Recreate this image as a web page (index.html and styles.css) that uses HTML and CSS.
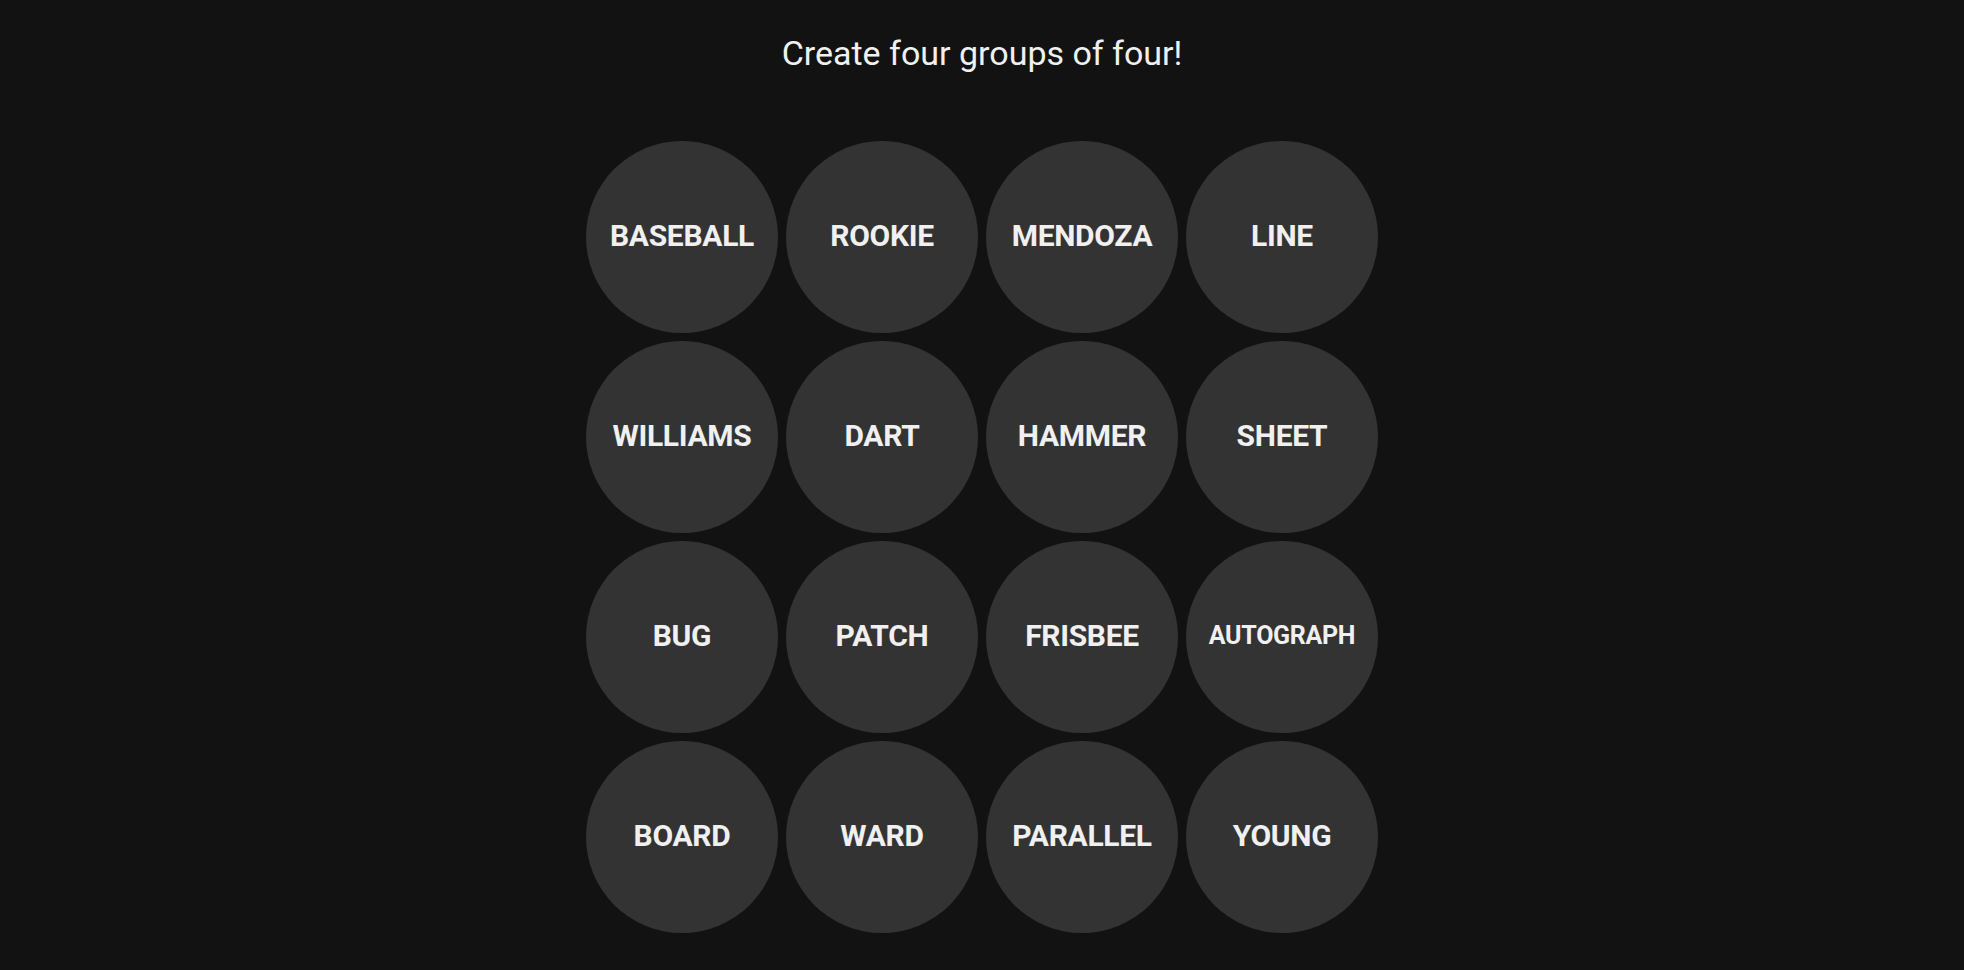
FILE: index.html
```html
<!DOCTYPE html>
<html lang="en">
<head>
<meta charset="UTF-8">
<meta name="viewport" content="width=device-width, initial-scale=1.0">
<title>Connections</title>
<link rel="stylesheet" href="styles.css">
</head>
<body>
<div id="game">
    <h2 class="prompt">Create four groups of four!</h2>
    <div id="board">
        <button class="card">BASEBALL</button>
        <button class="card">ROOKIE</button>
        <button class="card">MENDOZA</button>
        <button class="card">LINE</button>
        <button class="card">WILLIAMS</button>
        <button class="card">DART</button>
        <button class="card">HAMMER</button>
        <button class="card">SHEET</button>
        <button class="card">BUG</button>
        <button class="card">PATCH</button>
        <button class="card">FRISBEE</button>
        <button class="card small">AUTOGRAPH</button>
        <button class="card">BOARD</button>
        <button class="card">WARD</button>
        <button class="card">PARALLEL</button>
        <button class="card">YOUNG</button>
    </div>
</div>
</body>
</html>
```

FILE: styles.css
```css
html, body {
    margin: 0;
    padding: 0;
    background: #121212;
}
#game {
    display: flex;
    flex-direction: column;
    align-items: center;
    padding-top: 33px;
    font-family: Roboto, "Liberation Sans", sans-serif;
    color: #f0f0f0;
}
.prompt {
    margin: 0;
    font-size: 34px;
    line-height: 40px;
    font-weight: 400;
}
#board {
    margin-top: 68px;
    display: grid;
    grid-template-columns: repeat(4, 192px);
    grid-auto-rows: 192px;
    gap: 8px;
}
.card {
    display: flex;
    align-items: center;
    justify-content: center;
    padding: 0 0 4px;
    border: 0;
    border-radius: 50%;
    background: #333;
    color: #f0f0f0;
    font-family: Roboto, "Liberation Sans", sans-serif;
    font-size: 30px;
    font-weight: 700;
    letter-spacing: -0.3px;
    cursor: pointer;
}
.card.small {
    font-size: 25px;
}
```
